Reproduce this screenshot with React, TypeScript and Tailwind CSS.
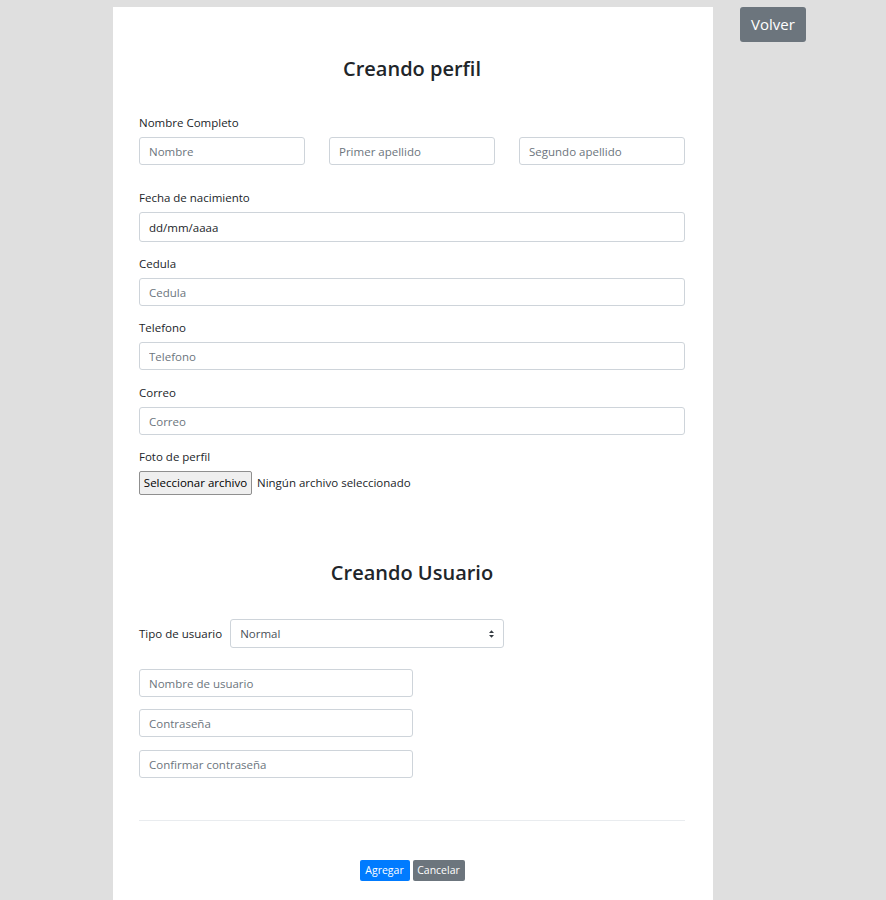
const font = { fontFamily: '"Open Sans", "Noto Sans", sans-serif' };

function Field({ placeholder, className = "" }: { placeholder: string; className?: string }) {
  return (
    <input
      type="text"
      placeholder={placeholder}
      className={
        "block h-[28px] rounded-[3px] border border-[#ced4da] bg-white px-[9px] text-[11.5px] text-[#495057] outline-none placeholder:text-[#6c757d] " +
        className
      }
    />
  );
}

function Label({ children, className = "" }: { children: string; className?: string }) {
  return <div className={"h-[18px] text-[11.5px] leading-[18px] text-[#212529] " + className}>{children}</div>;
}

export default function App() {
  return (
    <div className="min-h-[900px] bg-[#dfdfdf]" style={font}>
      <div className="flex items-start pt-[7px]">
        <div className="ml-[113px] w-[600px] bg-white pb-[40px] pl-[26px] pr-[28px] pt-[49px]">
          <h1 className="text-center text-[20px] font-semibold leading-[26px] text-[#212529]">Creando perfil</h1>

          <Label className="mt-[32px]">Nombre Completo</Label>
          <div className="mt-[5px] grid grid-cols-3 gap-[24px]">
            <Field placeholder="Nombre" className="w-full" />
            <Field placeholder="Primer apellido" className="w-full" />
            <Field placeholder="Segundo apellido" className="w-full" />
          </div>

          <Label className="mt-[24px]">Fecha de nacimiento</Label>
          <input
            type="text"
            defaultValue="dd/mm/aaaa"
            className="mt-[5px] block h-[30px] w-full rounded-[3px] border border-[#ced4da] px-[9px] text-[11.5px] text-[#212529] outline-none"
          />

          <Label className="mt-[13px]">Cedula</Label>
          <Field placeholder="Cedula" className="mt-[5px] w-full" />

          <Label className="mt-[13px]">Telefono</Label>
          <Field placeholder="Telefono" className="mt-[5px] w-full" />

          <Label className="mt-[14px]">Correo</Label>
          <Field placeholder="Correo" className="mt-[5px] w-full" />

          <Label className="mt-[13px]">Foto de perfil</Label>
          <div className="mt-[5px] flex h-[24px] items-center gap-[5px] text-[11.5px] text-[#212529]">
            <button className="h-[24px] w-[113px] rounded-[2px] border border-[#8f8f8f] bg-[#efefef] text-[11.5px] leading-[20px] text-black">
              Seleccionar archivo
            </button>
            <span>Ningún archivo seleccionado</span>
          </div>

          <h2 className="mt-[65px] text-center text-[20px] font-semibold leading-[26px] text-[#212529]">Creando Usuario</h2>

          <div className="mt-[33px] flex items-center gap-[8px]">
            <span className="text-[11.5px] leading-[18px] text-[#212529]">Tipo de usuario</span>
            <div className="relative h-[29px] w-[274px] rounded-[3px] border border-[#ced4da] bg-white">
              <select className="h-full w-full appearance-none bg-transparent pl-[9px] text-[11.5px] text-[#495057] outline-none">
                <option>Normal</option>
              </select>
              <svg viewBox="0 0 8 12" className="pointer-events-none absolute right-[9px] top-[10px] h-[8px] w-[5px]" fill="#343a40">
                <path d="M4 0 8 4.5H0zM4 12 0 7.5h8z" />
              </svg>
            </div>
          </div>

          <Field placeholder="Nombre de usuario" className="mt-[21px] w-[274px]" />
          <Field placeholder="Contraseña" className="mt-[12px] w-[274px]" />
          <Field placeholder="Confirmar contraseña" className="mt-[13px] w-[274px]" />

          <hr className="mt-[42px] border-t border-[#e9ecef]" />

          <div className="mt-[39px] flex justify-center gap-[3px]">
            <button className="h-[21px] w-[50px] rounded-[2px] bg-[#007bff] text-[10.5px] text-white">Agregar</button>
            <button className="h-[21px] w-[52px] rounded-[2px] bg-[#6c757d] text-[10.5px] text-white">Cancelar</button>
          </div>
        </div>

        <button className="ml-[27px] h-[35px] w-[66px] rounded-[3px] bg-[#6c757d] text-[15px] text-white">Volver</button>
      </div>
    </div>
  );
}
